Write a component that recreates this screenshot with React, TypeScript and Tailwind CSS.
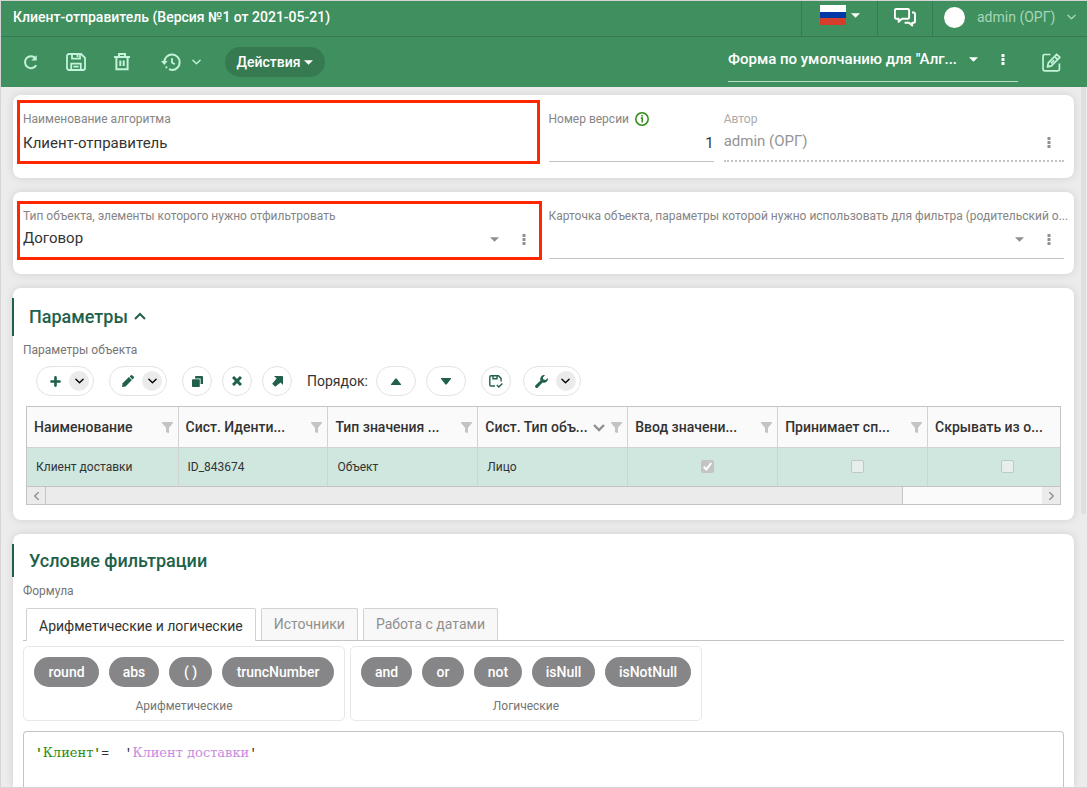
import React, { useState } from "react";

type IconProps = { className?: string };

const arithmetic = [
  { name: "round", width: "w-[65px]" },
  { name: "abs", width: "w-[50px]" },
  { name: "( )", width: "w-[43px]" },
  { name: "truncNumber", width: "w-[112px]" },
];

const logical = [
  { name: "and", width: "w-[51px]" },
  { name: "or", width: "w-[42px]" },
  { name: "not", width: "w-[48px]" },
  { name: "isNull", width: "w-[63px]" },
  { name: "isNotNull", width: "w-[86px]" },
];

const tabs = ["Арифметические и логические", "Источники", "Работа с датами"];

const columns = [
  { title: "Наименование", filter: true },
  { title: "Сист. Иденти...", filter: true },
  { title: "Тип значения ...", filter: true },
  { title: "Сист. Тип объ...", filter: true, sorted: true },
  { title: "Ввод значени...", filter: true },
  { title: "Принимает сп...", filter: true },
  { title: "Скрывать из о...", filter: false },
];

const row = {
  texts: ["Клиент доставки", "ID_843674", "Объект", "Лицо"],
  flags: [true, false, false],
};

function Caret({ className = "" }: IconProps) {
  return (
    <svg viewBox="0 0 10 5" className={"h-[5px] w-[9px] shrink-0 " + className} fill="currentColor">
      <path d="M0 0h10L5 5z" />
    </svg>
  );
}

function Chevron({ className = "" }: IconProps) {
  return (
    <svg viewBox="0 0 10 6" className={"h-[6px] w-[9px] shrink-0 " + className} fill="none" stroke="currentColor" strokeWidth="1.5">
      <path d="M1 1l4 4 4-4" strokeLinecap="round" strokeLinejoin="round" />
    </svg>
  );
}

function Dots({ className = "" }: IconProps) {
  return (
    <svg viewBox="0 0 4 11" className={"h-[11px] w-[4px] " + className} fill="currentColor">
      <rect x="0.5" width="3" height="3" rx="0.6" />
      <rect x="0.5" y="4" width="3" height="3" rx="0.6" />
      <rect x="0.5" y="8" width="3" height="3" rx="0.6" />
    </svg>
  );
}

function RefreshIcon() {
  return (
    <svg viewBox="0 0 16 16" className="h-4 w-4" fill="none" stroke="currentColor" strokeWidth="2">
      <path d="M13.2 11.2A6 6 0 1 1 12.4 4" />
      <path d="M13.7 1.2v5.4H8.3z" fill="currentColor" stroke="none" />
    </svg>
  );
}

function SaveIcon() {
  return (
    <svg viewBox="0 0 20 18" className="h-[18px] w-5" fill="none" stroke="currentColor" strokeWidth="1.8">
      <path d="M3 1h12.2L19 4.8V15a2 2 0 0 1-2 2H3a2 2 0 0 1-2-2V3a2 2 0 0 1 2-2z" strokeLinejoin="round" />
      <path d="M6 1v4.6h8V1M5.2 17v-6.4h9.6V17M7.4 13.6h5.2" />
      <path d="M10.6 1h1.8v3.2h-1.8z" fill="currentColor" stroke="none" />
    </svg>
  );
}

function TrashIcon() {
  return (
    <svg viewBox="0 0 16 18" className="h-[18px] w-4" fill="none" stroke="currentColor" strokeWidth="2">
      <path d="M0 4h16M2.4 4v12.2h11.2V4M5 3.6V1h6v2.6M6.3 7.4v5.6M9.7 7.4v5.6" />
    </svg>
  );
}

function HistoryIcon() {
  return (
    <svg viewBox="0 0 20 18" className="h-[18px] w-5" fill="none" stroke="currentColor" strokeWidth="2">
      <path d="M3.3 9A7.7 7.7 0 1 1 11 16.9a7.6 7.6 0 0 1-3-.7" />
      <path d="M11 5.2v4.4l2.8 1.6" strokeWidth="1.8" />
      <path d="M0 8h6.6l-3.300 4z" fill="currentColor" stroke="none" />
      <circle cx="5.4" cy="14.3" r="1.1" fill="currentColor" stroke="none" />
    </svg>
  );
}

function ChatIcon() {
  return (
    <svg viewBox="0 0 22 19" className="h-[19px] w-[22px]" fill="none" stroke="currentColor" strokeWidth="1.9" strokeLinejoin="round">
      <path d="M2.2 1h11.6a1.3 1.3 0 0 1 1.3 1.3v7.2a1.3 1.3 0 0 1-1.3 1.3H8L4.6 13.8v-3H2.2A1.3 1.3 0 0 1 .9 9.500V2.300A1.3 1.3 0 0 1 2.200 1z" />
      <path d="M18 4.500h1.800A1.3 1.3 0 0 1 21 5.800v7.600a1.3 1.3 0 0 1-1.3 1.3h-1.500V17.600L15 14.700h-4.400" />
    </svg>
  );
}

function EditIcon() {
  return (
    <svg viewBox="0 0 18 18" className="h-[19px] w-[19px]" fill="none" stroke="currentColor" strokeWidth="1.6" strokeLinejoin="round">
      <path d="M8 1.400H2.500A1.500 1.500 0 0 0 1 2.900v12.600A1.500 1.500 0 0 0 2.500 17H15a1.500 1.500 0 0 0 1.500-1.500V10" />
      <path d="M5.200 13.200l.8-3.900L13.900 1.200l3 3-8 8z" />
      <path d="M12 3.400l2.900 2.900M8.500 9.800l3-3" />
    </svg>
  );
}

function PlusIcon() {
  return (
    <svg viewBox="0 0 10 10" className="h-[11px] w-[11px]" fill="none" stroke="currentColor" strokeWidth="2.4" strokeLinecap="round">
      <path d="M5 1.300v7.400M1.300 5h7.400" />
    </svg>
  );
}

function PencilIcon() {
  return (
    <svg viewBox="0 0 12 12" className="h-3 w-3" fill="currentColor">
      <path d="M0 12l.6-3.700L6.900 2.100l3 3-6.300 6.300z" />
      <path d="M7.600 1.400L8.700.4a1.200 1.200 0 0 1 1.700 0l1.200 1.200a1.200 1.200 0 0 1 0 1.700l-1 1.100z" />
    </svg>
  );
}

function CopyIcon() {
  return (
    <svg viewBox="0 0 11 11" className="h-[11px] w-[11px]" fill="currentColor">
      <path d="M4 0h6a1 1 0 0 1 1 1v7H8.600V2.400H3V1a1 1 0 0 1 1-1z" />
      <rect y="3.200" width="7.800" height="7.800" rx="0.8" />
    </svg>
  );
}

function CrossIcon() {
  return (
    <svg viewBox="0 0 10 10" className="h-[10px] w-[10px]" fill="none" stroke="currentColor" strokeWidth="3">
      <path d="M1 1l8 8M9 1L1 9" />
    </svg>
  );
}

function ArrowIcon() {
  return (
    <svg viewBox="0 0 11 11" className="h-[11px] w-[11px]" fill="currentColor">
      <path d="M2 0h8.200a.8.8 0 0 1 .8.800V9L8.600 6.600 3.200 10.800.2 7.800 4.600 2.600z" />
    </svg>
  );
}

function SaveCheckIcon() {
  return (
    <svg viewBox="0 0 14 13" className="h-[13px] w-[14px]" fill="none" stroke="currentColor" strokeWidth="1.4">
      <path d="M6 11H2a1.200 1.200 0 0 1-1.200-1.200V1.900A1.200 1.200 0 0 1 2 .8h7.400l2.700 2.600v3M4 .8v3h4V.8" />
      <path d="M7.800 10l2 2 3.600-3.600" />
    </svg>
  );
}

function WrenchIcon() {
  return (
    <svg viewBox="0 0 13 13" className="h-[13px] w-[13px]" fill="currentColor">
      <path d="M12.800 3a3.900 3.900 0 0 1-5.200 4.500L2.800 12.400A1.500 1.500 0 0 1 .6 10.200L5.500 5.400A3.900 3.900 0 0 1 10 .2L7.900 2.400l.4 2.200 2.300.4z" />
    </svg>
  );
}

function FilterIcon() {
  return (
    <svg viewBox="0 0 11 11" className="h-[11px] w-[11px] shrink-0 text-[#c4c4c4]" fill="currentColor">
      <path d="M0 0h11v1L7 5.800V11L4 10.200V5.800L0 1z" />
    </svg>
  );
}

function MoreButton({ className = "text-[#8f8f8f]" }: IconProps) {
  return (
    <button type="button" aria-label="Ещё" className={"flex w-[30px] shrink-0 items-center justify-center " + className}>
      <Dots />
    </button>
  );
}

function SplitButton({ label, children }: { label: string; children: React.ReactNode }) {
  return (
    <div className="flex h-[30px] items-center rounded-full border border-[#e3e3e3] pr-1">
      <button type="button" aria-label={label} className="flex h-full w-8 items-center justify-center pl-1">
        {children}
      </button>
      <button type="button" aria-label={label + ": меню"} className="flex h-5 w-5 items-center justify-center rounded-full bg-[#ebebeb] text-black">
        <Chevron className="h-[5px] w-2" />
      </button>
    </div>
  );
}

function RoundButton({ label, wide, children }: { label: string; wide?: boolean; children: React.ReactNode }) {
  return (
    <button
      type="button"
      aria-label={label}
      className={
        "flex h-[30px] items-center justify-center rounded-full border border-[#e3e3e3] " +
        (wide ? "w-10" : "w-[30px]")
      }
    >
      {children}
    </button>
  );
}

function FunctionGroup({ title, items }: { title: string; items: { name: string; width: string }[] }) {
  return (
    <div className="rounded-[5px] border border-[#e8e8e8] px-[10px] pt-[10px] pb-[5px]">
      <div className="flex gap-[10px]">
        {items.map((it) => (
          <button
            key={it.name}
            type="button"
            className={"h-[30px] rounded-full bg-[#868688] text-[14px] font-medium text-white " + it.width}
          >
            {it.name}
          </button>
        ))}
      </div>
      <div className="mt-[10px] text-center text-[12px] leading-[18px] text-[#757575]">{title}</div>
    </div>
  );
}

export default function App() {
  const [name, setName] = useState("Клиент-отправитель");
  const [version, setVersion] = useState("1");
  const [activeTab, setActiveTab] = useState(0);
  const [open, setOpen] = useState(true);

  return (
    <div className="flex h-screen flex-col overflow-hidden border border-[#d5d5d5] bg-[#ececec] font-[Roboto,sans-serif] text-[#333]">
      <header className="shrink-0 bg-[#40905f] text-white">
        <div className="flex h-9 items-stretch border-b border-[#367a51]">
          <h1 className="flex min-w-0 flex-1 items-center pb-[2px] pl-3 text-[14px] font-medium">
            Клиент-отправитель (Версия №1 от 2021-05-21)
          </h1>
          <button type="button" aria-label="Язык" className="flex w-[76px] items-center gap-[5px] border-l border-[#367a51] pb-[7px] pl-[18px]">
            <svg viewBox="0 0 26 20" className="h-5 w-[26px]">
              <path fill="#fff" d="M0 0h26v7H0z" />
              <path fill="#0039a6" d="M0 7h26v6H0z" />
              <path fill="#d63d2b" d="M0 13h26v7H0z" />
            </svg>
            <Caret className="h-[4px] w-2" />
          </button>
          <button type="button" aria-label="Сообщения" className="flex w-[55px] items-center justify-center border-l border-[#367a51] pb-[2px]">
            <ChatIcon />
          </button>
          <button type="button" className="flex w-[155px] items-center border-l border-[#367a51] pb-[3px] pl-[11px] text-[14px] text-[#a5d6b9]">
            <span className="mr-3 h-[21px] w-[21px] rounded-full bg-white" />
            admin (ОРГ)
            <Chevron className="mr-[11px] ml-auto" />
          </button>
        </div>

        <div className="flex h-[50px] items-center pl-[22px] text-[#c3f3db]">
          <button type="button" aria-label="Обновить" className="mr-[27px]">
            <RefreshIcon />
          </button>
          <button type="button" aria-label="Сохранить" className="mr-7">
            <SaveIcon />
          </button>
          <button type="button" aria-label="Удалить" className="mr-[31px]">
            <TrashIcon />
          </button>
          <button type="button" aria-label="История" className="flex items-center gap-[11px]">
            <HistoryIcon />
            <Chevron />
          </button>
          <button
            type="button"
            className="ml-6 flex h-[30px] w-[100px] items-center justify-center gap-1 rounded-full bg-[#367a51] text-[14px] font-medium text-white"
          >
            Действия
            <Caret className="h-[4px] w-2" />
          </button>

          <div className="mr-6 ml-auto flex h-10 w-[290px] items-center border-b border-[#b9dcc6] pb-1 text-white">
            <select
              aria-label="Форма"
              className="h-full min-w-0 flex-1 appearance-none bg-transparent text-[15px] font-medium outline-none"
            >
              <option>Форма по умолчанию для "Алг...</option>
            </select>
            <Caret className="mr-[10px] h-[4px]" />
            <MoreButton className="text-white" />
          </div>
          <button type="button" aria-label="Редактировать форму" className="mr-[26px]">
            <EditIcon />
          </button>
        </div>
      </header>

      <div className="flex min-h-0 flex-1">
        <main className="flex min-w-0 flex-1 flex-col gap-[14px] overflow-hidden pt-2 pr-[7px] pl-3">
          <section className="grid shrink-0 grid-cols-2 gap-[10px] rounded-lg bg-white px-[10px] pt-[15px] pb-4 shadow-[0_0_8px_rgba(0,0,0,0.12)]">
            <div className="relative">
              <label htmlFor="name" className="block text-[12px] leading-[18px] text-[#858585]">
                Наименование алгоритма
              </label>
              <input
                id="name"
                className="block h-[34px] w-full border-b border-[#c4c4c4] pb-1 text-[15px] outline-none"
                value={name}
                onChange={(e) => setName(e.target.value)}
              />
              <div className="pointer-events-none absolute -top-[10px] -right-px -bottom-[2px] -left-[6px] border-3 border-[#ff2600]" />
            </div>

            <div className="grid grid-cols-3 gap-[10px]">
              <div>
                <div className="flex h-[18px] items-center gap-[6px]">
                  <label htmlFor="version" className="text-[12px] leading-[18px] text-[#858585]">
                    Номер версии
                  </label>
                  <svg viewBox="0 0 14 14" className="h-[14px] w-[14px]" fill="none" stroke="#2f8c12" strokeWidth="1.5">
                    <circle cx="7" cy="7" r="6.200" />
                    <path d="M5.800 6h1.400v4.400M7 3v1.500" />
                  </svg>
                </div>
                <input
                  id="version"
                  className="block h-[34px] w-full border-b border-[#c4c4c4] pb-1 text-right text-[15px] outline-none"
                  value={version}
                  onChange={(e) => setVersion(e.target.value)}
                />
              </div>
              <div className="col-span-2">
                <label htmlFor="author" className="block text-[12px] leading-[18px] text-[#ababab]">
                  Автор
                </label>
                <div className="flex h-[34px] border-b-2 border-dotted border-[#c4c4c4] pb-1">
                  <input
                    id="author"
                    className="min-w-0 flex-1 pb-[2px] text-[15px] text-[#949494] outline-none"
                    value="admin (ОРГ)"
                    readOnly
                  />
                  <MoreButton />
                </div>
              </div>
            </div>
          </section>

          <section className="grid shrink-0 grid-cols-2 gap-[10px] rounded-lg bg-white px-[10px] py-[15px] shadow-[0_0_8px_rgba(0,0,0,0.12)]">
            <div className="relative">
              <label htmlFor="objectType" className="block text-[12px] leading-[18px] text-[#858585]">
                Тип объекта, элементы которого нужно отфильтровать
              </label>
              <div className="flex h-[34px] items-center border-b border-[#c4c4c4] pb-1">
                <select id="objectType" className="h-full min-w-0 flex-1 appearance-none bg-transparent pb-[2px] text-[15px] outline-none">
                  <option>Договор</option>
                </select>
                <Caret className="mr-[10px] text-[#8f8f8f]" />
                <MoreButton />
              </div>
              <div className="pointer-events-none absolute -top-[6px] -right-[3px] -bottom-px -left-[6px] border-3 border-[#ff2600]" />
            </div>
            <div className="min-w-0">
              <label htmlFor="objectCard" className="block text-[12px] leading-[18px] whitespace-nowrap text-[#858585]">
                Карточка объекта, параметры которой нужно использовать для фильтра (родительский о...
              </label>
              <div className="flex h-[34px] items-center border-b border-[#c4c4c4] pb-1">
                <select id="objectCard" className="h-full min-w-0 flex-1 appearance-none bg-transparent pb-[2px] text-[15px] outline-none">
                  <option></option>
                </select>
                <Caret className="mr-[10px] text-[#8f8f8f]" />
                <MoreButton />
              </div>
            </div>
          </section>

          <section className="shrink-0 rounded-lg bg-white pt-[10px] pb-[15px] shadow-[0_0_8px_rgba(0,0,0,0.12)]">
            <h2 className="-ml-px flex h-[38px] items-center border-l-2 border-[#21614a] pb-[2px] pl-[15px] text-[18px] font-medium text-[#21614a]">
              Параметры
              <button type="button" aria-label="Свернуть" className="ml-[6px]" onClick={() => setOpen(!open)}>
                <svg viewBox="0 0 12 8" className="h-2 w-3" fill="none" stroke="currentColor" strokeWidth="2">
                  <path d={open ? "M1 7l5-5 5 5" : "M1 1l5 5 5-5"} />
                </svg>
              </button>
            </h2>
            {open && (
              <>
                <div className="mt-[5px] px-[10px] text-[12px] leading-[18px] text-[#757575]">Параметры объекта</div>
                <div className="mt-[7px] flex items-center pl-[23px] text-[#21614a]">
                  <div className="mr-[15px] flex gap-[15px]">
                    <SplitButton label="Добавить">
                      <PlusIcon />
                    </SplitButton>
                    <SplitButton label="Изменить">
                      <PencilIcon />
                    </SplitButton>
                  </div>
                  <div className="flex gap-[10px]">
                    <RoundButton label="Копировать">
                      <CopyIcon />
                    </RoundButton>
                    <RoundButton label="Удалить">
                      <CrossIcon />
                    </RoundButton>
                    <RoundButton label="Открыть">
                      <ArrowIcon />
                    </RoundButton>
                  </div>
                  <span className="mr-2 ml-[15px] text-[14px] text-[#333]">Порядок:</span>
                  <div className="mr-[15px] flex gap-[10px]">
                    <RoundButton label="Вверх" wide>
                      <svg viewBox="0 0 10 7" className="h-[7px] w-[10px]" fill="currentColor">
                        <path d="M4.400.4h1.200L10 6.200V7H0V6.200z" />
                      </svg>
                    </RoundButton>
                    <RoundButton label="Вниз" wide>
                      <svg viewBox="0 0 10 7" className="h-[7px] w-[10px]" fill="currentColor">
                        <path d="M0 0h10v.8L5.600 6.600H4.400L0 .8z" />
                      </svg>
                    </RoundButton>
                  </div>
                  <div className="flex gap-3">
                    <RoundButton label="Сохранить порядок">
                      <SaveCheckIcon />
                    </RoundButton>
                    <SplitButton label="Настройки">
                      <WrenchIcon />
                    </SplitButton>
                  </div>
                </div>

                <div className="mx-[13px] mt-[10px] overflow-hidden border border-[#c4c4c4]">
                  <table className="w-[1051px] table-fixed border-collapse text-left">
                    <thead className="bg-[#fafafa]">
                      <tr className="h-10 border-b border-[#d2d2d2]">
                        {columns.map((col) => (
                          <th
                            key={col.title}
                            className="border-r border-[#d2d2d2] pt-[2px] pr-[5px] pl-[7px] text-[14px] font-medium first:w-[151px]"
                          >
                            <div className="flex items-center">
                              <span className="flex-1 whitespace-nowrap">{col.title}</span>
                              {col.sorted && (
                                <svg viewBox="0 0 12 8" className="mr-[6px] h-2 w-3 shrink-0" fill="none" stroke="#8f8f8f" strokeWidth="2.4">
                                  <path d="M1 1l5 5 5-5" />
                                </svg>
                              )}
                              {col.filter && <FilterIcon />}
                            </div>
                          </th>
                        ))}
                      </tr>
                    </thead>
                    <tbody>
                      <tr className="h-[39px] bg-[#cfe7df]">
                        {row.texts.map((text) => (
                          <td key={text} className="border-r border-[#d2d2d2] pl-[9px] text-[12px]">
                            {text}
                          </td>
                        ))}
                        {row.flags.map((flag, idx) => (
                          <td key={idx} className="border-r border-[#d2d2d2] pl-[10px]">
                            <div className="relative mx-auto h-[13px] w-[13px]">
                              <input
                                type="checkbox"
                                aria-label={columns[idx + 4].title}
                                checked={flag}
                                disabled
                                className="block h-[13px] w-[13px] appearance-none rounded-[2px] border border-[#bfc8c4] bg-[#e6efec] checked:border-[#c4c4c4] checked:bg-[#c4c4c4]"
                              />
                              {flag && (
                                <svg viewBox="0 0 13 13" className="pointer-events-none absolute inset-0" fill="none" stroke="#fff" strokeWidth="2">
                                  <path d="M2.800 6.800l2.500 2.600L10.300 3" />
                                </svg>
                              )}
                            </div>
                          </td>
                        ))}
                      </tr>
                    </tbody>
                  </table>
                  <div className="flex h-[18px] border-t border-[#c4c4c4] bg-[#fafafa] text-[#8f8f8f]">
                    <button type="button" aria-label="Прокрутить влево" className="flex w-[19px] items-center justify-center border-r border-[#c4c4c4] bg-[#ebebeb]">
                      <Chevron className="rotate-90" />
                    </button>
                    <div className="flex-1">
                      <div className="h-full w-[86%] border-r border-[#c4c4c4] bg-[#ebebeb]" />
                    </div>
                    <button type="button" aria-label="Прокрутить вправо" className="flex w-[18px] items-center justify-center bg-[#ebebeb]">
                      <Chevron className="-rotate-90" />
                    </button>
                  </div>
                </div>
              </>
            )}
          </section>

          <section className="flex min-h-0 flex-1 flex-col rounded-t-lg bg-white pt-[10px] shadow-[0_0_8px_rgba(0,0,0,0.12)]">
            <h2 className="-ml-px flex h-[33px] shrink-0 items-center border-l-2 border-[#21614a] pl-[15px] text-[18px] font-medium text-[#21614a]">
              Условие фильтрации
            </h2>
            <div className="flex min-h-0 flex-1 flex-col px-[10px]">
              <div id="formulaLabel" className="mt-[5px] text-[12px] leading-[18px] text-[#757575]">
                Формула
              </div>
              <div role="tablist" className="mt-2 flex shrink-0 gap-[5px] border-b border-[#c4c4c4] pl-[3px]">
                {tabs.map((tab, idx) => (
                  <button
                    key={tab}
                    type="button"
                    role="tab"
                    aria-selected={activeTab === idx}
                    onClick={() => setActiveTab(idx)}
                    className={
                      "rounded-t-[2px] border border-b-0 border-[#d2d2d2] px-3 text-[14px] " +
                      (activeTab === idx ? "-mb-px h-[33px] bg-white pt-[2px] text-[#333]" : "h-8 bg-[#f8f8f8] text-[#8f8f8f]")
                    }
                  >
                    {tab}
                  </button>
                ))}
              </div>
              <div className="mt-[5px] flex shrink-0 gap-[5px]">
                <FunctionGroup title="Арифметические" items={arithmetic} />
                <FunctionGroup title="Логические" items={logical} />
              </div>
              <div
                role="textbox"
                aria-labelledby="formulaLabel"
                contentEditable
                suppressContentEditableWarning
                className="mt-[10px] min-h-0 flex-1 rounded-t-[4px] border border-b-0 border-[#c4c4c4] px-[11px] pt-3 font-['Liberation_Mono',monospace] text-[13px] leading-[18px] whitespace-pre outline-none"
              >
                <span className="font-bold text-[#2f8c12]">'</span>
                <span className="font-['DejaVu_Serif',serif] text-[#2f8c12]">Клиент</span>
                <span className="font-bold text-[#2f8c12]">'</span>
                {"=  '"}
                <span className="font-['DejaVu_Serif',serif] text-[#c78be0]">Клиент доставки</span>'
              </div>
            </div>
          </section>
        </main>
        <div className="w-[6px] shrink-0">
          <div className="h-[61%] w-[5px] rounded-b-full bg-[#dfdfdf]" />
        </div>
      </div>
    </div>
  );
}
